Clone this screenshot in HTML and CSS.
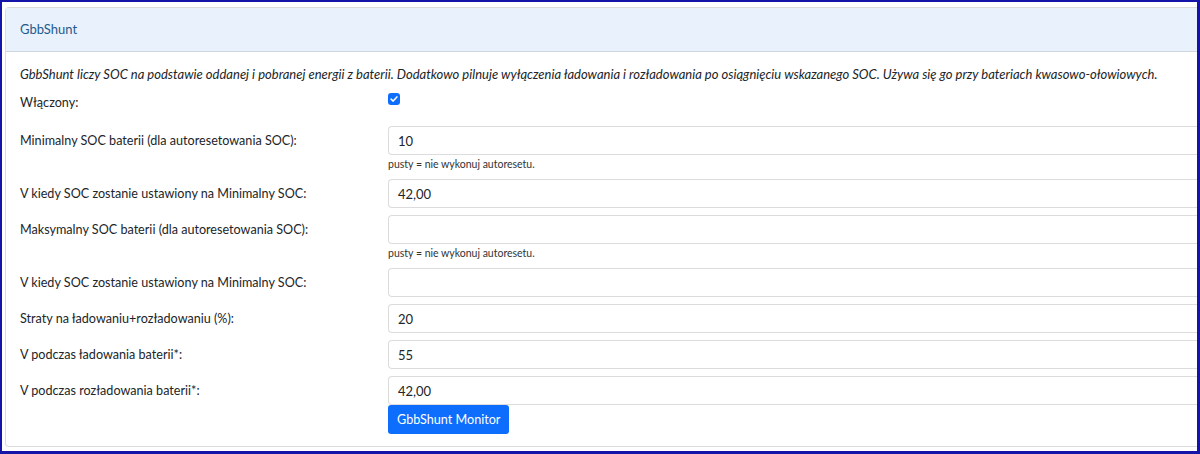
FILE: index.html
```html
<!DOCTYPE html>
<html lang="pl">
<head>
    <meta charset="UTF-8">
    <title>GbbShunt</title>
    <link rel="stylesheet" href="styles.css">
</head>
<body>
    <div class="frame">
        <div class="card">
            <div class="card-header">GbbShunt</div>
            <div class="card-body">
                <p class="desc">GbbShunt liczy SOC na podstawie oddanej i pobranej energii z baterii. Dodatkowo pilnuje wyłączenia ładowania i rozładowania po osiągnięciu wskazanego SOC. Używa się go przy bateriach kwasowo-ołowiowych.</p>

                <div class="row row-check">
                    <label>Włączony:</label>
                    <div class="field">
                        <span class="check">
                            <svg viewBox="0 0 12 12" width="10" height="10"><path d="M2.5 6.2 L5 8.5 L9.5 3.5" fill="none" stroke="#fff" stroke-width="1.8" stroke-linecap="round" stroke-linejoin="round"/></svg>
                        </span>
                    </div>
                </div>

                <div class="row">
                    <label>Minimalny SOC baterii (dla autoresetowania SOC):</label>
                    <div class="field">
                        <input type="text" value="10">
                        <small>pusty = nie wykonuj autoresetu.</small>
                    </div>
                </div>

                <div class="row">
                    <label>V kiedy SOC zostanie ustawiony na Minimalny SOC:</label>
                    <div class="field"><input type="text" value="42,00"></div>
                </div>

                <div class="row">
                    <label>Maksymalny SOC baterii (dla autoresetowania SOC):</label>
                    <div class="field">
                        <input type="text" value="">
                        <small>pusty = nie wykonuj autoresetu.</small>
                    </div>
                </div>

                <div class="row">
                    <label>V kiedy SOC zostanie ustawiony na Minimalny SOC:</label>
                    <div class="field"><input type="text" value=""></div>
                </div>

                <div class="row">
                    <label>Straty na ładowaniu+rozładowaniu (%):</label>
                    <div class="field"><input type="text" value="20"></div>
                </div>

                <div class="row">
                    <label>V podczas ładowania baterii*:</label>
                    <div class="field"><input type="text" value="55"></div>
                </div>

                <div class="row">
                    <label>V podczas rozładowania baterii*:</label>
                    <div class="field">
                        <input type="text" value="42,00">
                        <button type="button" class="btn-primary">GbbShunt Monitor</button>
                    </div>
                </div>
            </div>
        </div>
    </div>
</body>
</html>
```

FILE: styles.css
```css
:root {
    --frame-color: #1414a8;
    --primary-color: #0d6efd;
    --border-color: #dcdcdc;
    --header-bg: #e8f1fc;
    --header-text: #1d5b8c;
}

html, body {
    margin: 0;
    padding: 0;
}

body {
    font-family: Lato, "Noto Sans", sans-serif;
    font-size: 13px;
    color: #212529;
    background: #fff;
}

.frame {
    box-sizing: border-box;
    width: 1200px;
    height: 454px;
    border: 2px solid var(--frame-color);
    border-right-width: 3px;
    border-bottom-width: 3px;
    padding: 5px 0 0 3px;
    overflow: hidden;
}

.card {
    border: 1px solid var(--border-color);
    border-right: none;
    border-radius: 4px 0 0 4px;
    height: 440px;
    box-sizing: border-box;
}

.card-header {
    background-color: var(--header-bg);
    color: var(--header-text);
    height: 43px;
    line-height: 43px;
    padding: 0 14px;
    border-bottom: 1px solid #cfd6de;
}

.card-body {
    padding: 13px 0 0 14px;
}

.desc {
    margin: 0 0 6px;
    font-style: italic;
    line-height: 18px;
}

.row {
    display: grid;
    grid-template-columns: 368px 1fr;
    margin-bottom: 7px;
}

.row label {
    line-height: 29px;
    font-size: 12.6px;
}

.row-check label {
    line-height: 18px;
    padding-top: 5px;
}

.row-check {
    margin-bottom: 14px;
}

.field {
    display: flex;
    flex-direction: column;
    align-items: flex-start;
}

.check {
    display: inline-flex;
    align-items: center;
    justify-content: center;
    width: 12px;
    height: 12px;
    border-radius: 3px;
    background-color: var(--primary-color);
    margin-top: 4px;
}

input {
    box-sizing: border-box;
    width: 100%;
    height: 29px;
    margin: 0;
    padding: 0 9px;
    border: 1px solid var(--border-color);
    border-right: none;
    border-radius: 4px 0 0 4px;
    font-family: inherit;
    font-size: 13px;
    color: #212529;
}

small {
    display: block;
    font-size: 10.5px;
    color: #333;
    line-height: 15px;
    margin-top: 2px;
}

.btn-primary {
    margin: 0;
    height: 29px;
    padding: 0 9px;
    border: none;
    border-radius: 3px;
    background-color: var(--primary-color);
    color: #fff;
    font-family: inherit;
    font-size: 12.6px;
}
```
